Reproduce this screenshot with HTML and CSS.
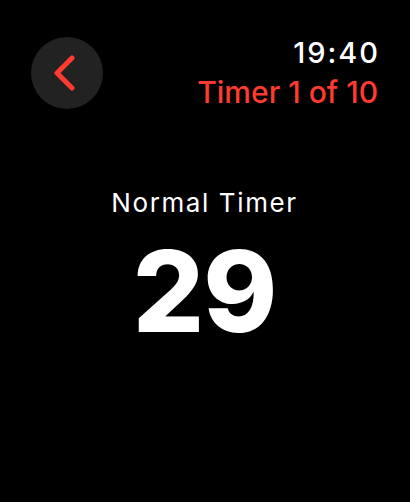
FILE: index.html
```html
<!DOCTYPE html>
<html lang="en">
<head>
    <meta charset="UTF-8">
    <title>Timer</title>
    <link rel="stylesheet" href="styles.css">
</head>
<body>
<div class="screen">
    <header class="top">
        <button class="back" aria-label="Back">
            <svg width="24" height="36" viewBox="0 0 24 36">
                <path d="M19 3 L4 18 L19 33" fill="none" stroke="#ff3b30" stroke-width="5" stroke-linecap="round" stroke-linejoin="round"/>
            </svg>
        </button>
        <div class="status">
            <div class="clock">19:40</div>
            <div class="title">Timer 1 of 10</div>
        </div>
    </header>

    <main class="timer">
        <div class="name">Normal Timer</div>
        <div class="count">29</div>
    </main>
</div>
</body>
</html>
```

FILE: styles.css
```css
*{box-sizing:border-box;}
html,body{margin:0;background:#000;}
body{font-family:Inter,"Noto Sans",sans-serif;color:#fff;}
.screen{width:410px;height:502px;padding:37px 32px 0 31px;}
.top{display:flex;justify-content:space-between;align-items:flex-start;}
.back{width:72px;height:72px;border:none;border-radius:50%;background:#222;display:flex;align-items:center;justify-content:center;padding:0 4px 0 0;cursor:pointer;}
.status{text-align:right;}
.clock{font-size:29px;line-height:32px;letter-spacing:2px;font-weight:500;margin-right:-2px;}
.title{font-size:30px;line-height:34px;color:#ff3b30;margin-top:6px;font-weight:500;}
.timer{text-align:center;margin-top:79px;}
.name{font-size:26px;letter-spacing:1.6px;line-height:30px;}
.count{font-size:112px;font-weight:800;line-height:112px;margin-top:17px;letter-spacing:-1px;}
```
